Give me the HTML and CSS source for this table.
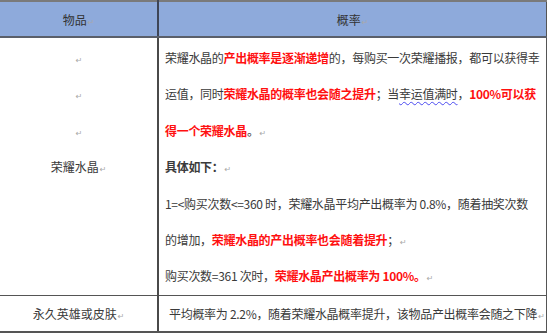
FILE: index.html
```html
<!DOCTYPE html>
<html lang="zh">
<head>
<meta charset="utf-8">
<link rel="stylesheet" href="styles.css">
</head>
<body>
<table class="prob">
  <tr class="head">
    <th class="c1">物品<span class="pm">↵</span></th>
    <th class="c2">概率<span class="pm">↵</span></th>
  </tr>
  <tr class="main">
    <td class="c1 left">
      <div class="ln"><span class="pm">↵</span></div>
      <div class="ln"><span class="pm">↵</span></div>
      <div class="ln"><span class="pm">↵</span></div>
      <div class="ln">荣耀水晶<span class="pm">↵</span></div>
    </td>
    <td class="c2 right">
      <div class="ln">荣耀水晶的<b class="red">产出概率是逐渐递增</b>的，每购买一次荣耀播报，都可以获得幸</div>
      <div class="ln">运值，同时<b class="red">荣耀水晶的概率也会随之提升</b>；当<span class="wavy">幸运值满时</span>，<b class="red">100%可以获</b></div>
      <div class="ln"><b class="red">得一个荣耀水晶</b>。<span class="pm">↵</span></div>
      <div class="ln"><b>具体如下：</b><span class="pm">↵</span></div>
      <div class="ln">1=&lt;购买次数&lt;=360 时，荣耀水晶平均产出概率为 0.8%，随着抽奖次数</div>
      <div class="ln">的增加，<b class="red">荣耀水晶的产出概率也会随着提升</b>；<span class="pm">↵</span></div>
      <div class="ln">购买次数=361 次时，<b class="red">荣耀水晶产出概率为 100%。</b><span class="pm">↵</span></div>
    </td>
  </tr>
  <tr class="last">
    <td class="c1">永久英雄或皮肤<span class="pm">↵</span></td>
    <td class="c2 right indent">平均概率为 2.2%，随着荣耀水晶概率提升，该物品产出概率会随之下降<span class="pm">↵</span></td>
  </tr>
</table>
</body>
</html>
```

FILE: styles.css
```css
html, body {
  margin: 0;
  padding: 0;
  background: #ffffff;
}

body {
  font-family: "Noto Sans CJK SC", "Noto Sans", sans-serif;
  font-size: 12px;
  color: #3a3a3a;
}

.prob {
  border-collapse: collapse;
  table-layout: fixed;
  width: 547px;
}

.prob th,
.prob td {
  padding: 0;
  vertical-align: top;
}

.prob .c1 {
  width: 157px;
  text-align: center;
  border-right: 2px solid #4a4a4a;
}

.prob .c2 {
  border-right: 1px solid #555555;
}

.prob .head th {
  height: 34px;
  background: #8eaadb;
  font-weight: normal;
  vertical-align: middle;
  color: #333333;
  border-top: 2px solid #7a7a7a;
  border-bottom: 2px solid #5a5f6a;
}

.prob .head .c1 {
  border-right: 2px solid #3e4556;
}

.prob .head .c2 {
  text-align: center;
}

.prob .main td {
  height: 253px;
  padding-top: 2px;
  border-bottom: 1px solid #555555;
}

.ln {
  line-height: 36.4px;
  height: 36.4px;
  white-space: nowrap;
}

.prob .right {
  padding-left: 6px;
  letter-spacing: -0.3px;
  text-align: left;
}

.red {
  color: #ff1010;
  font-weight: bold;
}

b {
  font-weight: bold;
}

.wavy {
  text-decoration: underline wavy #4a4af0;
  text-decoration-thickness: 1px;
  text-underline-offset: 2px;
}

.pm {
  font-family: "DejaVu Sans", sans-serif;
  font-size: 8px;
  color: #a8a8a8;
  margin-left: 1px;
  font-weight: normal;
  letter-spacing: 0;
}

.prob .last td {
  height: 35px;
  vertical-align: middle;
  border-bottom: 2px solid #555555;
}

.prob .last .indent {
  padding-left: 10px;
}
```
